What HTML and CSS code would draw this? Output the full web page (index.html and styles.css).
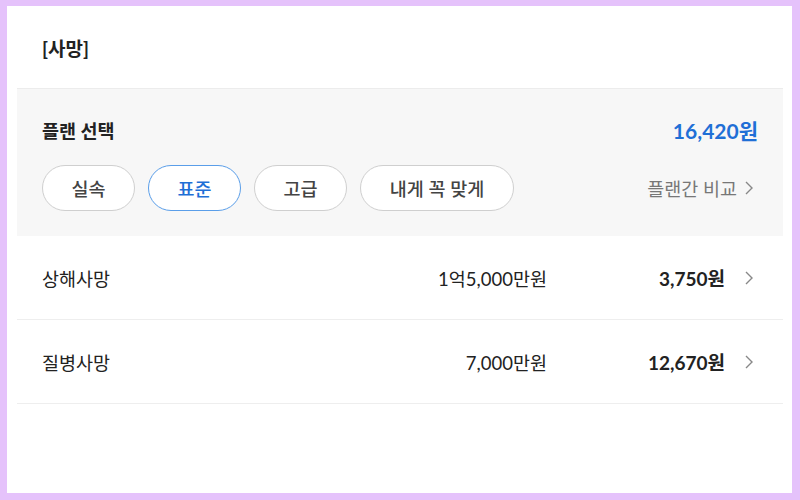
FILE: index.html
```html
<!DOCTYPE html>
<html lang="ko">
<head>
  <meta charset="UTF-8">
  <meta name="viewport" content="width=device-width, initial-scale=1">
  <title>사망 플랜</title>
  <link rel="stylesheet" href="styles.css">
</head>
<body>
  <div class="panel">
    <div class="title">[사망]</div>

    <div class="plan">
      <div class="plan-head">
        <span class="plan-label">플랜 선택</span>
        <span class="plan-price">16,420원</span>
      </div>
      <div class="plan-opts">
        <button class="chip">실속</button>
        <button class="chip active">표준</button>
        <button class="chip">고급</button>
        <button class="chip">내게 꼭 맞게</button>
        <a class="compare" href="#">플랜간 비교
          <svg class="chev" width="8" height="14" viewBox="0 0 8 14"><polyline points="1,1 7,7 1,13" /></svg>
        </a>
      </div>
    </div>

    <div class="row">
      <span class="name">상해사망</span>
      <span class="amount">1억5,000만원</span>
      <span class="price">3,750원</span>
      <svg class="chev" width="8" height="14" viewBox="0 0 8 14"><polyline points="1,1 7,7 1,13" /></svg>
    </div>
    <div class="row">
      <span class="name">질병사망</span>
      <span class="amount">7,000만원</span>
      <span class="price">12,670원</span>
      <svg class="chev" width="8" height="14" viewBox="0 0 8 14"><polyline points="1,1 7,7 1,13" /></svg>
    </div>
  </div>
</body>
</html>
```

FILE: styles.css
```css
body { margin: 0; background-color: #e5c2fb; font-family: Lato, "Noto Sans CJK KR", sans-serif; color: #222; }
.panel { background-color: #fff; margin: 6px 8px 7px 7px; height: 487px; padding: 0 9px 0 10px; box-sizing: border-box; }
.title { height: 82px; padding: 0 25px; display: flex; align-items: center; font-size: 19px; font-weight: 700; }

.plan { background-color: #f7f7f7; border-top: 1px solid #ececec; padding: 27px 25px 25px; }
.plan-head { display: flex; justify-content: space-between; align-items: center; height: 28px; }
.plan-label { font-size: 18.5px; font-weight: 700; }
.plan-price { font-size: 21px; font-weight: 700; color: #1f6fd6; }
.plan-opts { display: flex; align-items: center; gap: 13px; margin-top: 21px; }
.chip { width: 93px; height: 46px; border-radius: 23px; border: 1px solid #cfcfcf; background-color: #fff;
  font-family: inherit; font-size: 18.5px; font-weight: 500; color: #444; cursor: pointer; padding: 0; }
.chip:last-of-type { width: 154px; }
.chip.active { border-color: #5a9ee9; color: #1f6fd6; }
.compare { margin-left: auto; margin-right: 5px; color: #777; font-size: 18.5px; text-decoration: none;
  display: flex; align-items: center; gap: 8px; }

.chev { display: block; fill: none; stroke: #888; stroke-width: 1.4; }

.row { display: flex; align-items: center; height: 83px; border-bottom: 1px solid #eee; padding: 0 30px 0 25px; font-size: 18.5px; }
.row .name { flex: 1; }
.row .price { width: 178px; text-align: right; font-size: 19px; font-weight: 700; }
.row .chev { margin-left: 20px; }
```
